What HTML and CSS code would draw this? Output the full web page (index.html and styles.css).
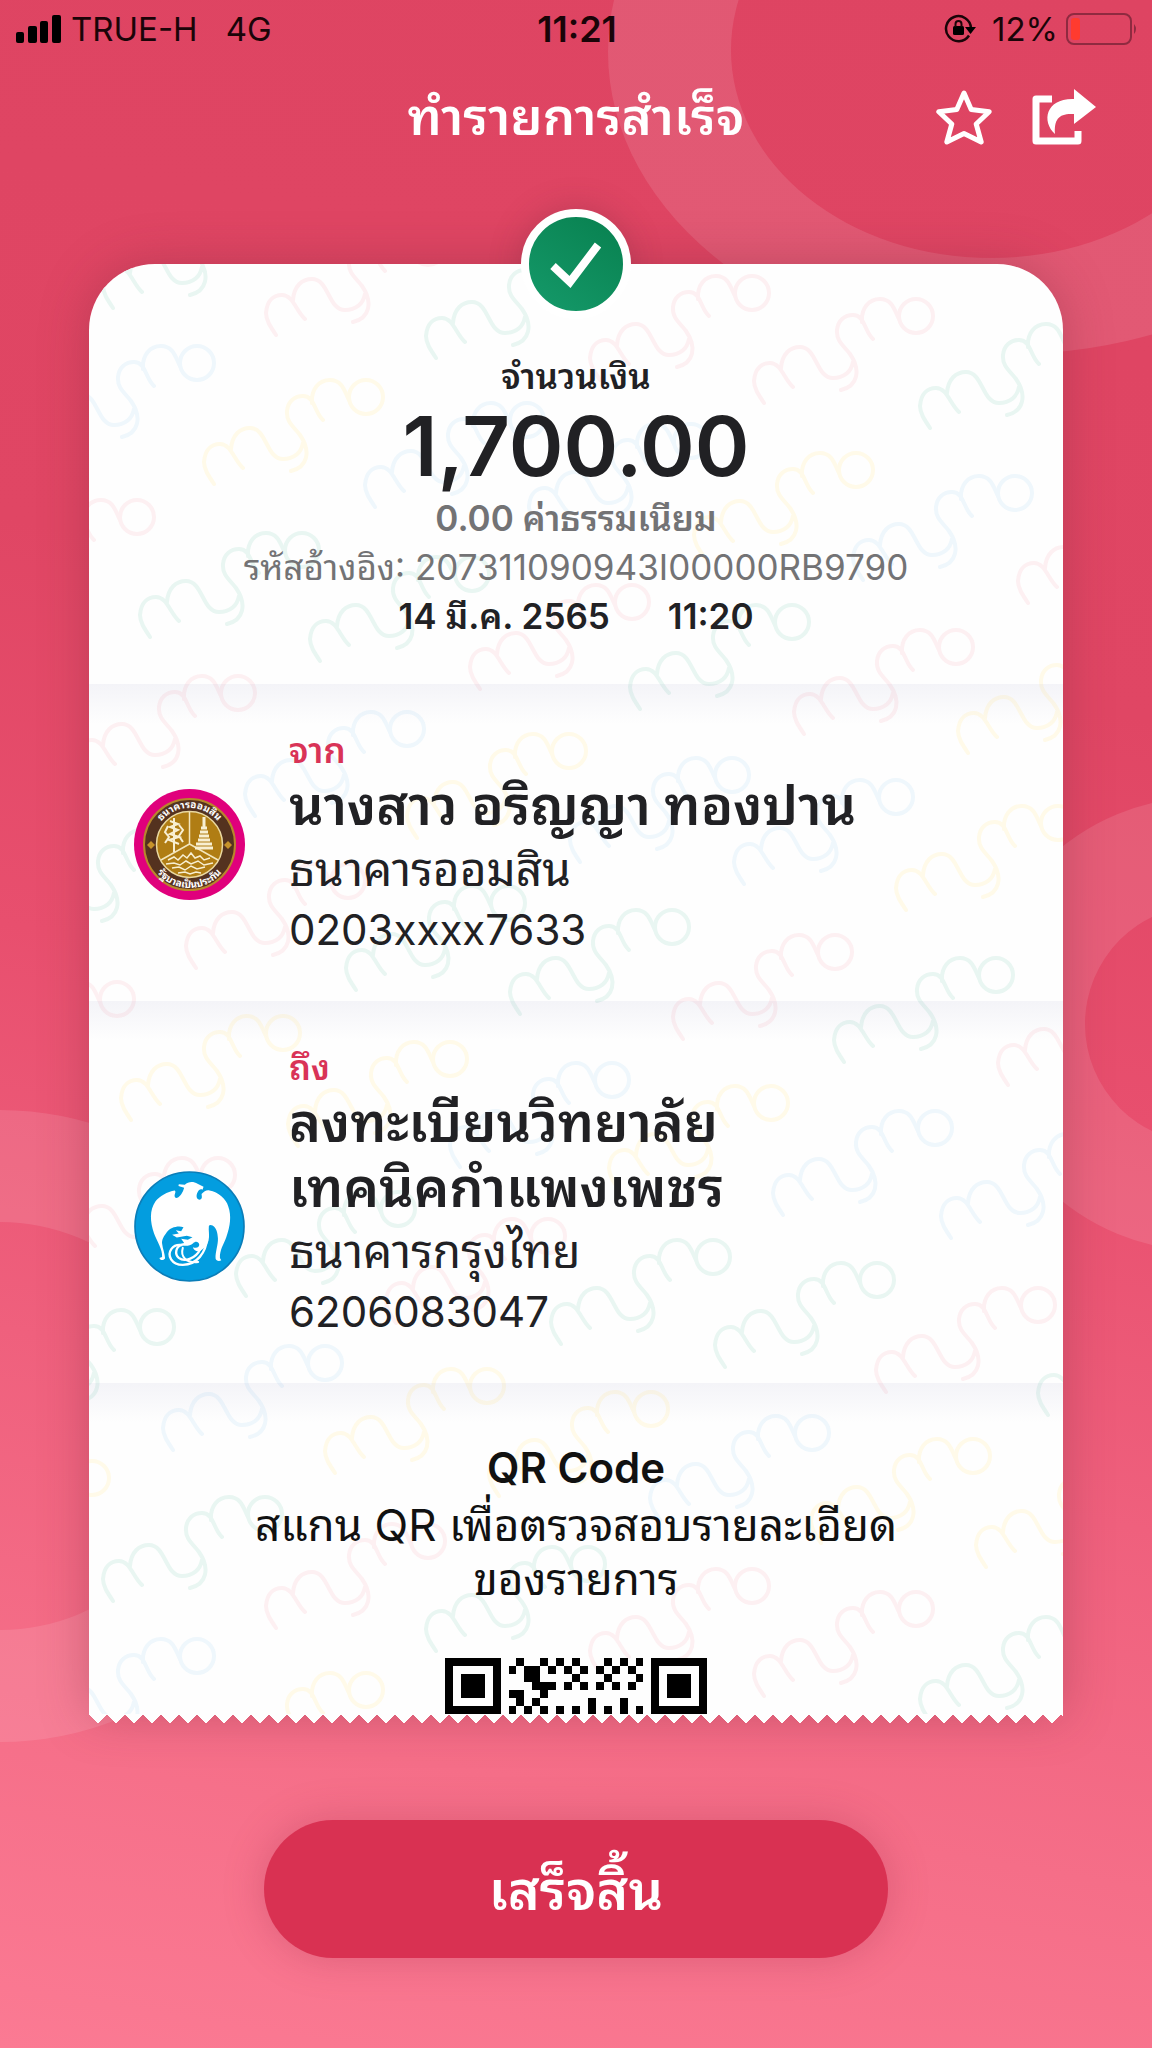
FILE: index.html
```
<!DOCTYPE html>
<html lang="th">
<head>
<meta charset="utf-8">
<meta name="viewport" content="width=device-width, initial-scale=1">
<title>ทำรายการสำเร็จ</title>
<link rel="stylesheet" href="styles.css">
</head>
<body>
<div class="screen">
  <svg class="backdrop" aria-hidden="true">
    <g class="ring">
      <path fill-rule="evenodd" d="M608 52a402 302 0 1 0 804 0a402 302 0 1 0-804 0zM731 50a260 208 0 1 0 520 0a260 208 0 1 0-520 0z"/>
      <path fill-rule="evenodd" d="M977 1024a227 227 0 1 0 454 0a227 227 0 1 0-454 0zM1085 1024a119 119 0 1 0 238 0a119 119 0 1 0-238 0z"/>
      <path fill-rule="evenodd" d="M-316 1426a316 316 0 1 0 632 0a316 316 0 1 0-632 0zM-204 1426a204 204 0 1 0 408 0a204 204 0 1 0-408 0z"/>
    </g>
  </svg>

  <div class="status">
    <div class="status-left">
      <svg class="signal" width="45" height="28" viewBox="0 0 45 28" aria-hidden="true">
        <rect x="0" y="17" width="8" height="11" rx="2"/><rect x="12" y="11" width="9" height="17" rx="2"/><rect x="24" y="6" width="8" height="22" rx="2"/><rect x="36" y="0" width="9" height="28" rx="2"/>
      </svg>
      <span>TRUE-H</span>
      <span class="network">4G</span>
    </div>
    <time class="clock">11:21</time>
    <div class="status-right">
      <svg width="32" height="30" viewBox="0 0 32 30" aria-hidden="true">
        <path d="M25 21.500A12.500 12.500 0 1 1 27 14" fill="none" stroke="#1a0408" stroke-width="2.500"/>
        <path d="M21 13h11l-5.500 7z"/>
        <rect x="9" y="12" width="11" height="9" rx="1.500"/>
        <path d="M11.500 13v-3a3 3 0 0 1 6 0v3" fill="none" stroke="#1a0408" stroke-width="2"/>
      </svg>
      <span>12%</span>
      <svg width="72" height="32" viewBox="0 0 72 32" aria-hidden="true">
        <rect x="1" y="1" width="64" height="30" rx="7" fill="none" stroke="#8f2a40" stroke-width="2"/>
        <rect x="5" y="5" width="9" height="22" rx="3" fill="#ff3b2f"/>
        <path d="M68 11q4 5 0 10z" fill="#8f2a40"/>
      </svg>
    </div>
  </div>

  <header class="header">
    <h1 class="title">ทำรายการสำเร็จ</h1>
    <div class="actions">
      <button class="icon-button" type="button" aria-label="รายการโปรด">
        <svg width="56" height="56" viewBox="0 0 56 56"><path d="M28 4l7.200 16.500 18 2.300-13 12.200 5 18L28 44.500 10.800 53l5-18-13-12.200 18-2.300z" fill="none" stroke="#fff" stroke-width="5" stroke-linejoin="round"/></svg>
      </button>
      <button class="icon-button" type="button" aria-label="แชร์">
        <svg width="64" height="56" viewBox="0 0 64 56"><path d="M20 10H4v42h42V42" fill="none" stroke="#fff" stroke-width="7" stroke-linejoin="round"/><path d="M42 0l22 18-22 17V25c-15-1-20 5-19 20C9 32 14 9 42 10z" fill="#fff"/></svg>
      </button>
    </div>
  </header>

  <main class="slip">
    <div class="badge">
      <svg width="94" height="94" viewBox="0 0 94 94" role="img" aria-label="สำเร็จ"><path d="M24 49l17 16 28-37" fill="none" stroke="#fff" stroke-width="8"/></svg>
    </div>
    <article class="card">
      <svg class="watermark" aria-hidden="true">
        <defs>
          <g id="mymo">
            <path d="M-152 87C-158 78-162 72-162 65C-161 52-154 47-146 47C-135 47-132 63-123 71M-135 52C-134 38-126 31-116 31C-99 31-100 62-83 62C-72 62-65 56-63 46M-79 14C-80 25-72 30-66 38C-55 54-58 70-75 74M-79 14C-78 4-71-1-63-1C-51-1-52 15-43 23M-54 6C-55-8-47-17-36-17C-23-17-21-4-17 3"/>
            <circle r="17"/>
          </g>
        </defs>
        <g transform="translate(-89 -264)">
          <g class="mint">
            <use href="#mymo" x="265" y="221"/><use href="#mymo" x="588" y="271"/><use href="#mymo" x="1082" y="341"/>
            <use href="#mymo" x="302" y="550"/><use href="#mymo" x="472" y="574"/><use href="#mymo" x="792" y="622"/>
            <use href="#mymo" x="177" y="847"/><use href="#mymo" x="508" y="903"/><use href="#mymo" x="672" y="927"/><use href="#mymo" x="996" y="975"/>
            <use href="#mymo" x="398" y="1209"/><use href="#mymo" x="713" y="1257"/><use href="#mymo" x="877" y="1280"/><use href="#mymo" x="1200" y="1328"/>
            <use href="#mymo" x="157" y="1327"/><use href="#mymo" x="265" y="1514"/><use href="#mymo" x="588" y="1564"/><use href="#mymo" x="1082" y="1634"/>
          </g>
          <g class="rose">
            <use href="#mymo" x="428" y="248"/><use href="#mymo" x="752" y="293"/><use href="#mymo" x="916" y="316"/>
            <use href="#mymo" x="137" y="517"/><use href="#mymo" x="632" y="602"/><use href="#mymo" x="956" y="647"/><use href="#mymo" x="1180" y="516"/>
            <use href="#mymo" x="238" y="693"/><use href="#mymo" x="348" y="881"/><use href="#mymo" x="835" y="952"/><use href="#mymo" x="1160" y="998"/>
            <use href="#mymo" x="117" y="999"/><use href="#mymo" x="218" y="1175"/><use href="#mymo" x="548" y="1236"/><use href="#mymo" x="1038" y="1305"/>
            <use href="#mymo" x="428" y="1541"/><use href="#mymo" x="752" y="1586"/><use href="#mymo" x="916" y="1609"/>
          </g>
          <g class="sky">
            <use href="#mymo" x="197" y="363"/><use href="#mymo" x="527" y="420"/><use href="#mymo" x="691" y="441"/><use href="#mymo" x="1015" y="493"/>
            <use href="#mymo" x="407" y="729"/><use href="#mymo" x="732" y="775"/><use href="#mymo" x="896" y="797"/>
            <use href="#mymo" x="612" y="1080"/><use href="#mymo" x="935" y="1128"/><use href="#mymo" x="1103" y="1151"/>
            <use href="#mymo" x="325" y="1363"/><use href="#mymo" x="812" y="1433"/><use href="#mymo" x="197" y="1656"/>
          </g>
          <g class="lemon">
            <use href="#mymo" x="366" y="397"/><use href="#mymo" x="856" y="470"/><use href="#mymo" x="1120" y="666"/>
            <use href="#mymo" x="569" y="751"/><use href="#mymo" x="1058" y="823"/><use href="#mymo" x="283" y="1033"/><use href="#mymo" x="450" y="1059"/>
            <use href="#mymo" x="771" y="1103"/><use href="#mymo" x="487" y="1386"/><use href="#mymo" x="651" y="1409"/><use href="#mymo" x="973" y="1456"/>
            <use href="#mymo" x="1138" y="1480"/><use href="#mymo" x="92" y="1478"/><use href="#mymo" x="366" y="1690"/>
          </g>
        </g>
      </svg>

      <section class="summary">
        <h2 class="summary-label">จำนวนเงิน</h2>
        <p class="amount">1,700.00</p>
        <p class="fee">0.00 ค่าธรรมเนียม</p>
        <p class="reference">รหัสอ้างอิง: 207311090943I00000RB9790</p>
        <p class="date"><span>14 มี.ค. 2565</span><span>11:20</span></p>
      </section>

      <section class="party">
        <svg class="logo" viewBox="0 0 111 111" role="img" aria-label="ธนาคารออมสิน">
          <defs>
            <path id="arc-top" d="M19 55.500a36.500 36.500 0 0 1 73 0"/>
            <path id="arc-bottom" d="M13.500 57a42 42 0 0 0 84 0"/>
          </defs>
          <circle cx="55.500" cy="55.500" r="55.500" fill="#e0007c"/>
          <circle cx="55.500" cy="55.500" r="45.500" fill="#54321f" stroke="#b8862c" stroke-width="2"/>
          <circle cx="55.500" cy="55.500" r="33" fill="#b07d14" stroke="#ead9a0" stroke-width="1.500"/>
          <path d="M55.500 23v32M55.500 55L27 71M55.500 55L84 71" stroke="#f3e6bd" stroke-width="1.500"/>
          <g fill="none" stroke="#f8efd2">
            <path d="M40 29v34M36 32l8 3-8 3 8 3-8 4 9 3-10 3 10 4M34 37l-3 6 4 5-4 6M45 36l4 5-4 6 4 6" stroke-width="2"/>
            <path d="M70 28v12M67 39h6M66 43h8M65 47h10M64 51h12M62 55h16M61 59h18" stroke-width="3"/>
            <path d="M34 71l6-3 4 3 5-5 4 3 4-5 4 5 5-2 4 4 6-2M32 75l8-1 6 2 6-4 5 3 7-3 6 4 9-2M38 79l7-1 6 3 6-4 6 3 8-2M44 84l7-1 5 2 6-2 5 1" stroke-width="1.500"/>
          </g>
          <path d="M17 52l4 4-4 4-4-4zM94 52l4 4-4 4-4-4z" fill="#c6922a"/>
          <text class="seal"><textPath href="#arc-top" startOffset="50%">ธนาคารออมสิน</textPath></text>
          <text class="seal"><textPath href="#arc-bottom" startOffset="50%">รัฐบาลเป็นประกัน</textPath></text>
        </svg>
        <div class="party-text">
          <h2 class="party-label">จาก</h2>
          <p class="party-name">นางสาว อริญญา ทองปาน</p>
          <p class="party-bank">ธนาคารออมสิน</p>
          <p class="party-account">0203xxxx7633</p>
        </div>
      </section>

      <section class="party">
        <svg class="logo" viewBox="42 34 332 332" role="img" aria-label="ธนาคารกรุงไทย">
          <circle cx="208" cy="200" r="163" fill="#039ddf" stroke="#0a7db8" stroke-width="5"/>
          <path fill="#fff" d="M192 84l-17-5 1-5 18 1c10-10 26-11 38-3l18 9-3 9c-6-3-11 0-14 6-7 12-4 24 6 24 8-2 6-10 5-17 8-8 14-13 24-11 26 5 50 24 56 48 10 28 6 58-6 92-8 22-20 38-19 62l4 7c-6 4-16 2-17-5-1-20 8-42 7-61-1-16-4-30-16-38-5-3-9-2-11 1-2 14 3 30-1 44-3 13-12 23-25 31-12 3-20-3-22-11 12 4 20 0 19-9-2-9-12-10-18-3-12 10-30 10-42 2l15-3-9-12 20 3 14-8-17-4-30 5-14-8 20-4-9-10 16 3 7-12c-15-6-40 0-50 15-8 12-15 20-14 34 2 16 8 30 9 44-4 8-16 6-17-1l8-3c2-22-15-46-24-70-12-36-14-70 4-96 12-16 36-30 58-33 6 5-5 13 2 22 9 3 20-12 24-24z"/>
          <g fill="none" stroke="#fff" stroke-linecap="round">
            <path d="M260 236c-2 42-30 78-72 79-34-1-48-28-34-48 6-8 14-12 24-12" stroke-width="7"/>
            <path d="M240 268c-12 26-46 40-64 26-14-12-8-34 8-38" stroke-width="7"/>
            <path d="M188 264c-8 26 10 46 46 42" stroke-width="6"/>
          </g>
        </svg>
        <div class="party-text">
          <h2 class="party-label">ถึง</h2>
          <p class="party-name">ลงทะเบียนวิทยาลัย<br>เทคนิคกำแพงเพชร</p>
          <p class="party-bank">ธนาคารกรุงไทย</p>
          <p class="party-account">6206083047</p>
        </div>
      </section>

      <section class="qr">
        <h2 class="qr-title">QR Code</h2>
        <p class="qr-text">สแกน QR เพื่อตรวจสอบรายละเอียด<br>ของรายการ</p>
        <svg class="qr-code" viewBox="0 0 33 7" role="img" aria-label="QR Code" shape-rendering="crispEdges">
          <path fill-rule="evenodd" d="M0 0h7v7H0zM1 1v5h5V1zM2 2h3v3H2zM26 0h7v7h-7zM27 1v5h5V1zM28 2h3v3h-3z"/>
          <path d="M9 0h1v1H9zM12 0h1v1h-1zM14 0h1v1h-1zM16 0h1v1h-1zM20 0h1v1h-1zM22 0h1v1h-1zM24 0h1v1h-1zM8 1h1v1H8zM10 1h2v2h-2zM13 1h1v1h-1zM15 1h1v1h-1zM17 1h1v1h-1zM19 1h1v1h-1zM21 1h1v1h-1zM23 1h1v1h-1zM16 2h1v1h-1zM20 2h1v1h-1zM24 2h1v1h-1zM11 3h3v1h-3zM15 3h1v1h-1zM17 3h1v1h-1zM19 3h1v1h-1zM21 3h1v1h-1zM23 3h1v1h-1zM8 4h2v1H8zM12 4h1v1h-1zM9 5h1v1H9zM11 5h1v1h-1zM18 5h1v2h-1zM22 5h1v2h-1zM8 6h1v1H8zM10 6h1v1h-1zM12 6h1v1h-1zM14 6h1v1h-1zM16 6h1v1h-1zM20 6h1v1h-1zM24 6h1v1h-1z"/>
        </svg>
      </section>
    </article>
    <div class="torn-edge"></div>
  </main>

  <footer class="footer">
    <button class="done" type="button">เสร็จสิ้น</button>
  </footer>
</div>
</body>
</html>
```
FILE: styles.css
```
* {
  box-sizing: border-box;
}

body {
  margin: 0;
  font-family: Inter, "Noto Sans Thai Looped", "Noto Sans Thai", "Noto Sans", sans-serif;
  color: #212124;
}

h1, h2, p {
  margin: 0;
}

svg {
  display: block;
}

.screen {
  position: relative;
  min-height: 100vh;
  overflow: hidden;
  display: flex;
  flex-direction: column;
  background: linear-gradient(190deg, #de4462 0%, #e04664 32%, #e84f6e 50%, #ef607d 68%, #f56e88 84%, #fb7a93 100%);
}

.backdrop {
  position: absolute;
  inset: 0;
  width: 100%;
  height: 100%;
}

.ring {
  fill: #fff;
  fill-opacity: 0.11;
}

.status,
.header {
  position: relative;
  display: grid;
  grid-template-columns: 1fr auto 1fr;
  align-items: center;
}

.status {
  height: 60px;
  padding: 0 14px 2px 16px;
  font-size: 33px;
  line-height: 40px;
  color: #1a0408;
}

.status-left,
.status-right {
  display: flex;
  align-items: center;
}

.status-left {
  gap: 10px;
}

.network {
  margin-left: 18px;
}

.clock {
  font-size: 36px;
  font-weight: 600;
}

.status-right {
  justify-content: flex-end;
  gap: 8px;
}

.status-right span {
  margin-left: 8px;
}

.header {
  height: 114px;
  padding: 0 56px;
}

.title {
  grid-column: 2;
  font-size: 51px;
  line-height: 64px;
  font-weight: 600;
  color: #fff;
}

.actions {
  display: flex;
  justify-content: flex-end;
  gap: 40px;
}

.icon-button {
  padding: 0;
  border: 0;
  background: none;
}

.slip {
  position: relative;
  margin: 90px 89px 0;
}

.badge {
  position: absolute;
  top: -55px;
  left: 50%;
  z-index: 2;
  margin-left: -55px;
  border: 8px solid #fff;
  border-radius: 50%;
  background: linear-gradient(215deg, #08804f, #159a6a);
}

.badge::before {
  content: "";
  position: absolute;
  inset: -8px;
  z-index: -1;
  border-radius: 50%;
  box-shadow: 0 0 32px rgba(110, 40, 60, 0.3);
  clip-path: inset(-48px -48px 55px -48px);
}

.card {
  position: relative;
  overflow: hidden;
  border-radius: 66px 66px 0 0;
  background: #fefefe;
}

.slip::before {
  content: "";
  position: absolute;
  inset: 0 0 8px;
  border-radius: 66px 66px 0 0;
  box-shadow: 0 0 48px rgba(120, 40, 60, 0.34);
}

.watermark {
  position: absolute;
  inset: 0;
  width: 100%;
  height: 100%;
  fill: none;
  stroke-width: 4;
  stroke-linecap: round;
}

.mint {
  stroke: #e9f6f2;
}

.rose {
  stroke: #fdf0f2;
}

.sky {
  stroke: #eff7fc;
}

.lemon {
  stroke: #fffae9;
}

.summary {
  position: relative;
  padding: 90px 0 43px;
  text-align: center;
}

.summary-label {
  font-size: 35px;
  line-height: 44px;
  font-weight: 600;
}

.amount {
  font-size: 83px;
  line-height: 96px;
  font-weight: 600;
}

.fee,
.reference,
.date {
  font-size: 35px;
  line-height: 49px;
}

.fee {
  font-weight: 600;
  color: #737375;
}

.reference {
  color: #737375;
}

.date {
  display: flex;
  justify-content: center;
  gap: 58px;
  font-weight: 600;
}

.party {
  position: relative;
  display: flex;
  align-items: flex-end;
  gap: 44px;
  padding: 43px 45px 41px;
}

.party,
.qr {
  background: linear-gradient(rgba(80, 80, 150, 0.06), rgba(80, 80, 150, 0) 40px);
}

.logo {
  flex: none;
  width: 111px;
  height: 111px;
  margin-bottom: 60px;
}

.seal {
  font-size: 10px;
  font-weight: 700;
  fill: #fff;
  text-anchor: middle;
}

.party-label {
  font-size: 35px;
  line-height: 46px;
  font-weight: 600;
  color: #d93357;
}

.party-name {
  font-size: 54px;
  line-height: 65px;
  font-weight: 600;
}

.party-bank {
  font-size: 46px;
  line-height: 62px;
}

.party-account {
  font-size: 42px;
  line-height: 60px;
}

.qr {
  position: relative;
  display: flex;
  flex-direction: column;
  align-items: center;
  padding-top: 55px;
  text-align: center;
  color: #111;
}

.qr-title {
  font-size: 42px;
  line-height: 60px;
  font-weight: 600;
}

.qr-text {
  font-size: 44px;
  line-height: 54px;
}

.qr-code {
  width: 262px;
  height: 56px;
  margin-top: 52px;
}

.torn-edge {
  position: relative;
  height: 9px;
  background: conic-gradient(from -48deg at 50% 100%, #fefefe 96deg, transparent 0) 0 0 / 18px 9px repeat-x;
}

.footer {
  position: relative;
  display: flex;
  justify-content: center;
  padding: 97px 24px 90px;
}

.done {
  width: 624px;
  max-width: 100%;
  height: 138px;
  padding: 0 0 8px;
  border: 0;
  border-radius: 69px;
  background: #d93152;
  box-shadow: 0 0 40px rgba(150, 40, 70, 0.28);
  font-family: inherit;
  font-size: 54px;
  font-weight: 600;
  color: #fff;
}
```
